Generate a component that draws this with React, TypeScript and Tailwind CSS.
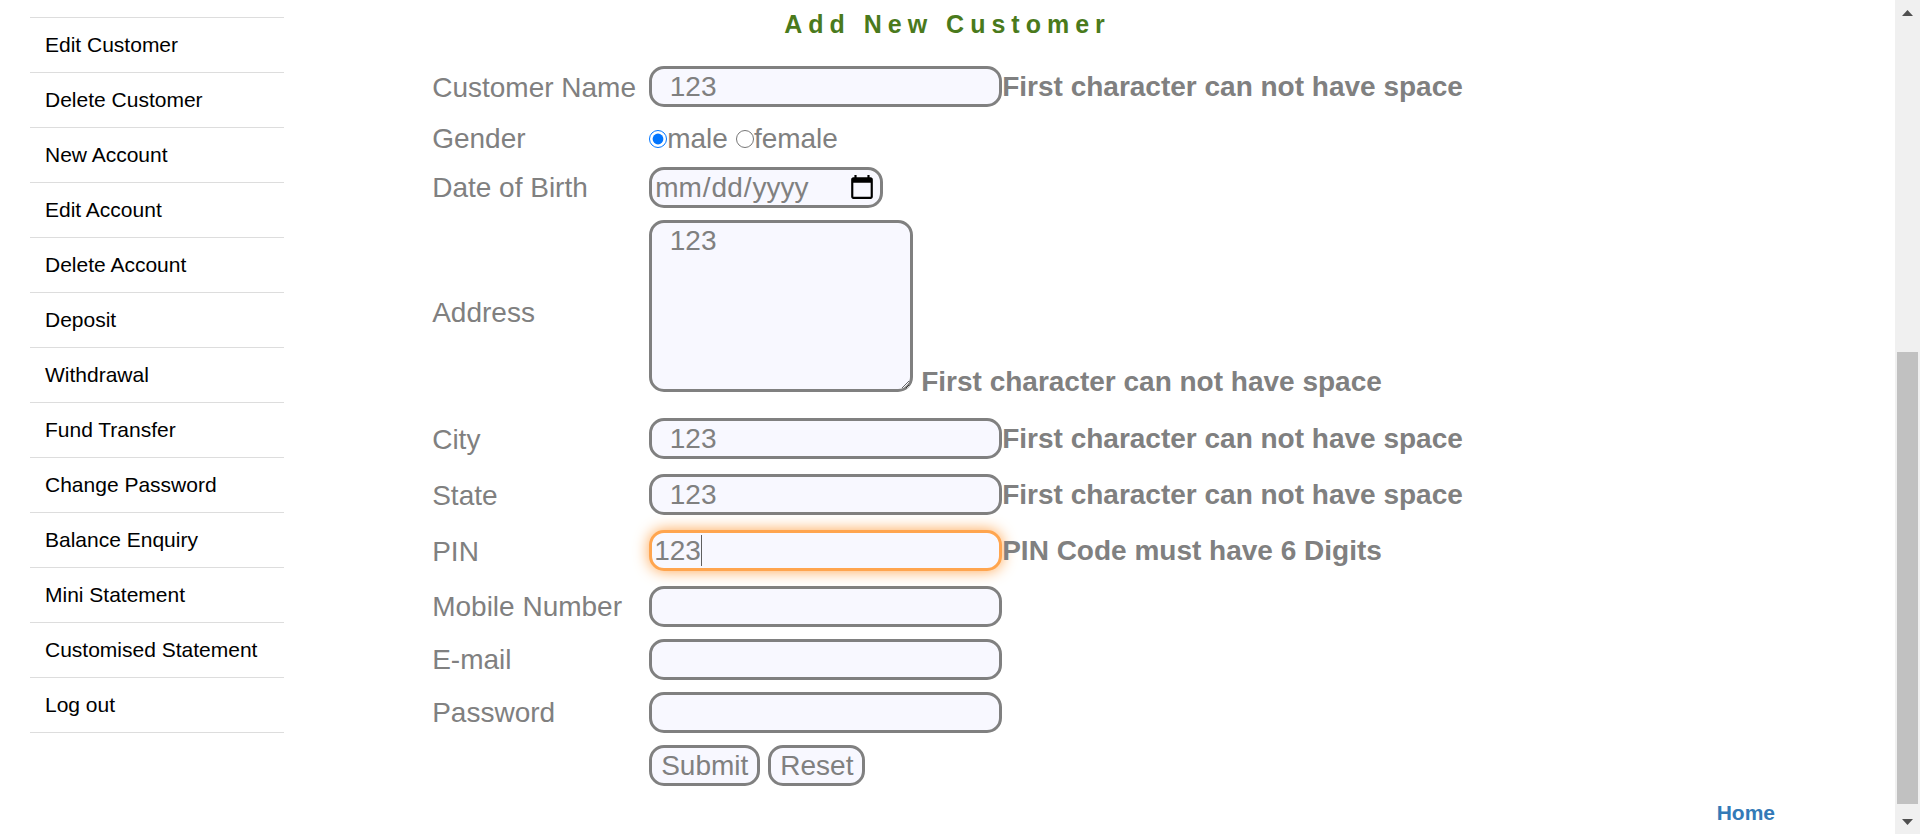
import { useState } from "react";
import type { ReactNode } from "react";

const menuItems = [
  "Edit Customer",
  "Delete Customer",
  "New Account",
  "Edit Account",
  "Delete Account",
  "Deposit",
  "Withdrawal",
  "Fund Transfer",
  "Change Password",
  "Balance Enquiry",
  "Mini Statement",
  "Customised Statement",
  "Log out",
];

const SPACE_ERROR = "First character can not have space";

const boxClass =
  "rounded-[15px] border-[3px] border-[#808080] bg-[#f8f8ff] outline-none focus:border-[#ffa54f] focus:shadow-[0_0_15px_#ffa54f]";

function Row({
  label,
  htmlFor,
  children,
}: {
  label: string;
  htmlFor?: string;
  children: ReactNode;
}) {
  return (
    <div className="flex items-center">
      <div className="w-[217px] shrink-0 leading-8">
        {htmlFor ? <label htmlFor={htmlFor}>{label}</label> : label}
      </div>
      {children}
    </div>
  );
}

function TextRow({
  id,
  label,
  type = "text",
  initial = "",
  error,
  focused = false,
}: {
  id: string;
  label: string;
  type?: string;
  initial?: string;
  error?: string;
  focused?: boolean;
}) {
  const [value, setValue] = useState(initial);
  return (
    <Row label={label} htmlFor={id}>
      <div className={error ? "relative flex items-start pb-0.5" : "flex items-start"}>
        <input
          id={id}
          name={id}
          type={type}
          value={value}
          autoFocus={focused}
          onChange={(e) => setValue(e.target.value)}
          className={`h-[41px] w-[353px] px-0.5 caret-transparent ${boxClass}`}
        />
        {/* Drawn caret, placed after the typed digits */}
        {focused && (
          <span className="pointer-events-none absolute left-[5px] top-[5px] flex h-[31px]" aria-hidden="true">
            <span className="invisible">{value}</span>
            <span className="w-px bg-[#606060]" />
          </span>
        )}
        {error && <span className="relative font-bold leading-[42px]">{error}</span>}
      </div>
    </Row>
  );
}

function Menu() {
  return (
    <nav className="ml-[30px] w-[254px] pt-[17px]">
      <ul className="border-t border-[#dddddd]">
        {menuItems.map((item) => (
          <li key={item} className="border-b border-[#dddddd]">
            <a href="#" className="block px-[15px] py-3 text-[21px] leading-[30px] text-black">
              {item}
            </a>
          </li>
        ))}
      </ul>
    </nav>
  );
}

function ScrollRail() {
  return (
    <div className="flex w-[25px] shrink-0 flex-col bg-[#f0f0f0] px-0.5" aria-hidden="true">
      <div className="flex h-[25px] items-center justify-center">
        <svg width="11" height="6" viewBox="0 0 11 6" fill="#505050">
          <path d="M0 6 5.5 0 11 6Z" />
        </svg>
      </div>
      <div className="flex-[327]" />
      <div className="flex-[452] bg-[#c1c1c1]" />
      <div className="flex-[5]" />
      <div className="flex h-[25px] items-center justify-center">
        <svg width="11" height="6" viewBox="0 0 11 6" fill="#505050">
          <path d="M0 0 5.5 6 11 0Z" />
        </svg>
      </div>
    </div>
  );
}

export default function App() {
  const [address, setAddress] = useState("  123");
  return (
    <div className="flex min-h-screen bg-white font-['Liberation_Sans',Arial,sans-serif]">
      <div className="grid flex-1 grid-cols-[1fr_auto_1fr]">
        <Menu />

        <main className="pt-[9px] text-[28px] text-[#808080]">
          <h1 className="text-center text-[25px] font-bold leading-[30px] tracking-[6px] text-[#4a7a1c]">
            Add New Customer
          </h1>
          <form className="mt-[27px] flex flex-col gap-3" onSubmit={(e) => e.preventDefault()}>
            <TextRow id="name" label="Customer Name" initial="  123" error={SPACE_ERROR} />
            <Row label="Gender">
              <div className="flex h-[33px] items-center gap-2" role="radiogroup" aria-label="Gender">
                <label className="flex items-center">
                  <input type="radio" name="gender" defaultChecked className="size-[18px]" />
                  male
                </label>
                <label className="flex items-center">
                  <input type="radio" name="gender" className="size-[18px]" />
                  female
                </label>
              </div>
            </Row>
            <Row label="Date of Birth" htmlFor="dob">
              <input id="dob" name="dob" type="date" className={`h-[41px] w-[234px] px-0.5 ${boxClass}`} />
            </Row>
            <Row label="Address" htmlFor="address">
              <div className="flex items-end gap-2 pb-1">
                <textarea
                  id="address"
                  name="address"
                  value={address}
                  onChange={(e) => setAddress(e.target.value)}
                  className={`mb-2.5 h-[172px] w-[264px] p-0.5 leading-8 ${boxClass}`}
                />
                <span className="font-bold leading-10">{SPACE_ERROR}</span>
              </div>
            </Row>
            <TextRow id="city" label="City" initial="  123" error={SPACE_ERROR} />
            <TextRow id="state" label="State" initial="  123" error={SPACE_ERROR} />
            <TextRow id="pin" label="PIN" initial="123" error="PIN Code must have 6 Digits" focused />
            <TextRow id="mobile" label="Mobile Number" />
            <TextRow id="email" label="E-mail" type="email" />
            <TextRow id="password" label="Password" type="password" />
            <div className="ml-[217px] flex gap-2">
              <button type="submit" className={`h-[41px] px-[9px] leading-8 ${boxClass}`}>
                Submit
              </button>
              <button type="reset" className={`h-[41px] px-[9px] leading-8 ${boxClass}`}>
                Reset
              </button>
            </div>
          </form>
        </main>

        <footer className="self-end pr-[120px] pb-1.5 text-right text-[21px] font-bold leading-[30px]">
          <a href="#" className="text-[#337ab7]">
            Home
          </a>
        </footer>
      </div>
      <ScrollRail />
    </div>
  );
}
